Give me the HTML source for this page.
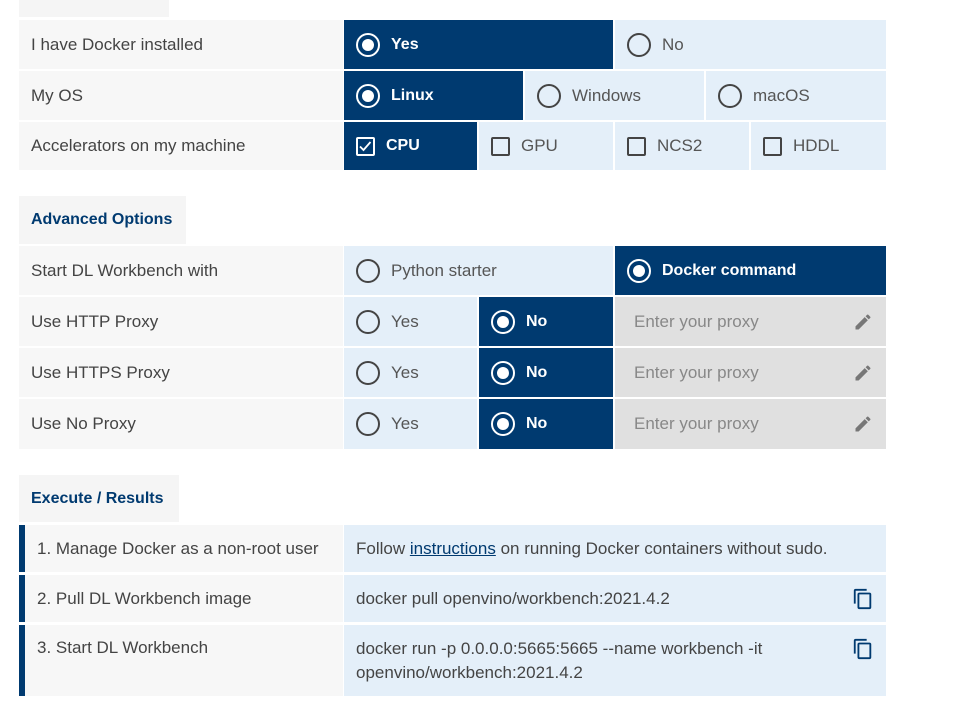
<!DOCTYPE html>
<html><head><style>
*{margin:0;padding:0;box-sizing:border-box}
body{width:979px;height:723px;background:#fff;font-family:"Liberation Sans",sans-serif;font-size:17px;color:#444;position:relative;overflow:hidden}
.c{position:absolute;display:flex;align-items:center;padding-left:12px;white-space:nowrap}
.l{background:#f7f7f7;color:#444}
.o{background:#e4eff9;color:#555}
.s{background:#003a70;color:#fff;font-weight:bold;font-size:16px}
.g{background:#e0e0e0;color:#888;padding-left:19px}
.t{position:absolute;background:#f5f5f5;color:#003a70;font-weight:bold;font-size:16px;display:flex;align-items:center;padding-left:12px}
.r{width:24px;height:24px;border-radius:50%;border:2px solid #444;margin-right:11px;flex:none}
.s .r{border-color:#fff;position:relative}
.s .r::after{content:"";position:absolute;left:4px;top:4px;width:12px;height:12px;border-radius:50%;background:#fff}
.k{width:19px;height:19px;border:2px solid #444;border-radius:2px;margin-right:11px;flex:none;position:relative}
.s .k{border-color:#fff}
.bar{position:absolute;left:19px;width:6px;background:#003a70}
</style></head><body>
<div class="t" style="left:19px;top:0;width:150px;height:17px"></div>

<div class="c l" style="left:19px;top:20px;width:324px;height:49px">I have Docker installed</div>
<div class="c s" style="left:344px;top:20px;width:269px;height:49px"><span class="r"></span>Yes</div>
<div class="c o" style="left:615px;top:20px;width:271px;height:49px"><span class="r"></span>No</div>

<div class="c l" style="left:19px;top:71px;width:324px;height:49px">My OS</div>
<div class="c s" style="left:344px;top:71px;width:179px;height:49px"><span class="r"></span>Linux</div>
<div class="c o" style="left:525px;top:71px;width:179px;height:49px"><span class="r"></span>Windows</div>
<div class="c o" style="left:706px;top:71px;width:180px;height:49px"><span class="r"></span>macOS</div>

<div class="c l" style="left:19px;top:122px;width:324px;height:48px">Accelerators on my machine</div>
<div class="c s" style="left:344px;top:122px;width:133px;height:48px"><span class="k"><svg width="15" height="15" viewBox="0 0 15 15" style="position:absolute;left:0;top:0"><path d="M2 7.5l3.5 3.5 7-8" stroke="#fff" stroke-width="1.8" fill="none"/></svg></span>CPU</div>
<div class="c o" style="left:479px;top:122px;width:134px;height:48px"><span class="k"></span>GPU</div>
<div class="c o" style="left:615px;top:122px;width:134px;height:48px"><span class="k"></span>NCS2</div>
<div class="c o" style="left:751px;top:122px;width:135px;height:48px"><span class="k"></span>HDDL</div>

<div class="t" style="left:19px;top:196px;width:167px;height:48px">Advanced Options</div>

<div class="c l" style="left:19px;top:246px;width:324px;height:49px">Start DL Workbench with</div>
<div class="c o" style="left:344px;top:246px;width:269px;height:49px"><span class="r"></span>Python starter</div>
<div class="c s" style="left:615px;top:246px;width:271px;height:49px"><span class="r"></span>Docker command</div>

<div class="c l" style="left:19px;top:297px;width:324px;height:49px">Use HTTP Proxy</div>
<div class="c o" style="left:344px;top:297px;width:133px;height:49px"><span class="r"></span>Yes</div>
<div class="c s" style="left:479px;top:297px;width:134px;height:49px"><span class="r"></span>No</div>
<div class="c g" style="left:615px;top:297px;width:271px;height:49px">Enter your proxy</div>

<div class="c l" style="left:19px;top:348px;width:324px;height:49px">Use HTTPS Proxy</div>
<div class="c o" style="left:344px;top:348px;width:133px;height:49px"><span class="r"></span>Yes</div>
<div class="c s" style="left:479px;top:348px;width:134px;height:49px"><span class="r"></span>No</div>
<div class="c g" style="left:615px;top:348px;width:271px;height:49px">Enter your proxy</div>

<div class="c l" style="left:19px;top:399px;width:324px;height:50px">Use No Proxy</div>
<div class="c o" style="left:344px;top:399px;width:133px;height:50px"><span class="r"></span>Yes</div>
<div class="c s" style="left:479px;top:399px;width:134px;height:50px"><span class="r"></span>No</div>
<div class="c g" style="left:615px;top:399px;width:271px;height:50px">Enter your proxy</div>

<svg width="20" height="20" viewBox="0 0 24 24" style="position:absolute;left:853px;top:312px"><path d="M3 17.25V21h3.75L17.8 9.94l-3.75-3.75L3 17.25zM20.7 7.04a1 1 0 000-1.41l-2.34-2.34a1 1 0 00-1.41 0l-1.83 1.83 3.75 3.75 1.83-1.83z" fill="#777"/></svg>
<svg width="20" height="20" viewBox="0 0 24 24" style="position:absolute;left:853px;top:363px"><path d="M3 17.25V21h3.75L17.8 9.940l-3.75-3.75L3 17.25zM20.7 7.04a1 1 0 000-1.41l-2.34-2.34a1 1 0 00-1.41 0l-1.83 1.830 3.75 3.75 1.83-1.83z" fill="#777"/></svg>
<svg width="20" height="20" viewBox="0 0 24 24" style="position:absolute;left:853px;top:414px"><path d="M3 17.25V21h3.75L17.8 9.94l-3.75-3.75L3 17.25zM20.7 7.04a1 1 0 000-1.41l-2.34-2.34a1 1 0 00-1.41 0l-1.83 1.83 3.75 3.75 1.83-1.83z" fill="#777"/></svg>

<div class="t" style="left:19px;top:475px;width:160px;height:47px">Execute / Results</div>

<div class="bar" style="top:525px;height:47px"></div>
<div class="c l" style="left:25px;top:525px;width:318px;height:47px">1. Manage Docker as a non-root user</div>
<div class="c o" style="left:344px;top:525px;width:542px;height:47px;color:#444">Follow&nbsp;<span style="text-decoration:underline;color:#003a70">instructions</span>&nbsp;on running Docker containers without sudo.</div>

<div class="bar" style="top:575px;height:47px"></div>
<div class="c l" style="left:25px;top:575px;width:318px;height:47px">2. Pull DL Workbench image</div>
<div class="c o" style="left:344px;top:575px;width:542px;height:47px;color:#444">docker pull openvino/workbench:2021.4.2</div>

<div class="bar" style="top:625px;height:71px"></div>
<div class="c l" style="left:25px;top:625px;width:318px;height:71px;align-items:flex-start;padding-top:13px">3. Start DL Workbench</div>
<div class="c o" style="left:344px;top:625px;width:542px;height:71px;color:#444;align-items:flex-start;padding-top:12px;line-height:24px;white-space:normal;padding-right:100px">docker run -p 0.0.0.0:5665:5665 --name workbench -it openvino/workbench:2021.4.2</div>

<svg width="22" height="22" viewBox="0 0 24 24" style="position:absolute;left:852px;top:588px"><path d="M16 1H4a2 2 0 00-2 2v14h2V3h12V1zm3 4H8a2 2 0 00-2 2v14a2 2 0 002 2h11a2 2 0 002-2V7a2 2 0 00-2-2zm0 16H8V7h11v14z" fill="#003a70"/></svg>
<svg width="22" height="22" viewBox="0 0 24 24" style="position:absolute;left:852px;top:638px"><path d="M16 1H4a2 2 0 00-2 2v14h2V3h12V1zm3 4H8a2 2 0 00-2 2v14a2 2 0 002 2h11a2 2 0 002-2V7a2 2 0 00-2-2zm0 16H8V7h11v14z" fill="#003a70"/></svg>
</body></html>
